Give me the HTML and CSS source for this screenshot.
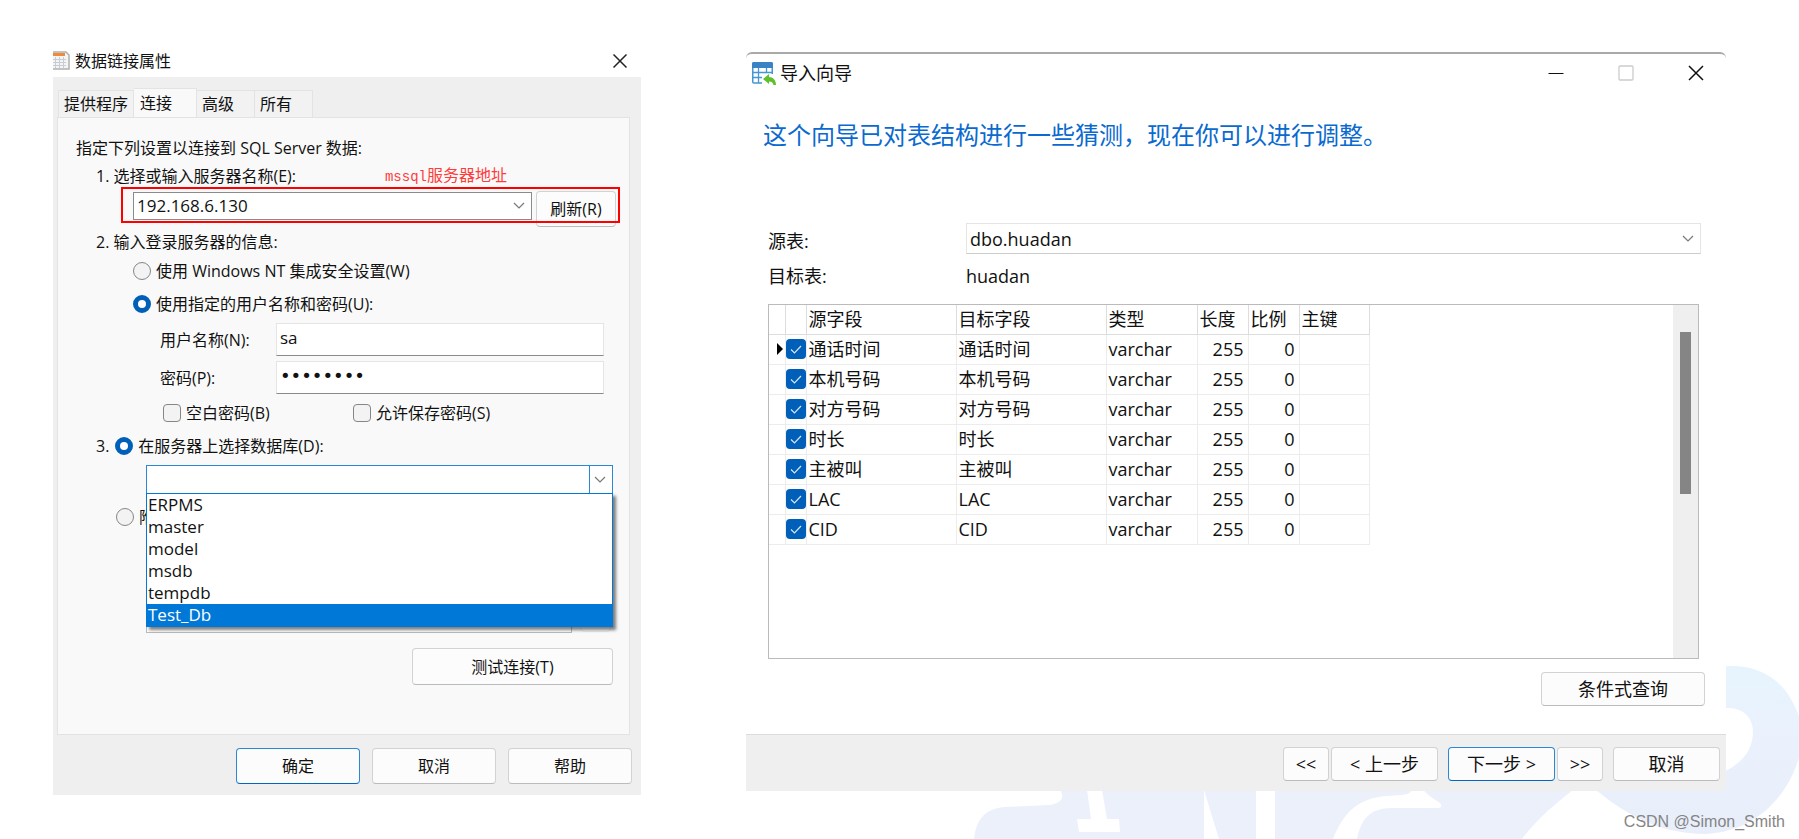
FILE: index.html
```html
<!DOCTYPE html>
<html lang="zh-CN">
<head>
  <meta charset="UTF-8">
  <meta name="viewport" content="width=device-width, initial-scale=1.0">
  <title>数据链接属性 / 导入向导</title>
  <link rel="stylesheet" href="styles.css">
</head>
<body>
  <svg class="backdrop" viewBox="969 660 830 179" aria-hidden="true">
    <defs>
      <linearGradient id="ring" x1="0" y1="0" x2="0" y2="1">
        <stop offset="0" stop-color="#e6f4fe"/>
        <stop offset="0.45" stop-color="#ebf1fc"/>
        <stop offset="1" stop-color="#e8effa"/>
      </linearGradient>
    </defs>
    <path fill="#ebf0fb" d="M974 839C976 818 986 809 1004 807L1050 805C1062 803 1065 797 1060 790H1573C1556 803 1536 820 1522 839Z"/>
    <path fill="#fff" d="M1087 790H1102L1107 819H1119L1120 832H1079L1077 819H1091ZM1204 790L1219 839H1204ZM1256 790H1275V839H1256Z"/>
    <path fill="#fff" d="M1333 839C1344 811 1360 798 1386 796L1402 795Q1412 794 1411 790H1423Q1431 798 1440 803Q1444 808 1437 808H1392C1369 808 1361 820 1357 839Z"/>
    <path fill="url(#ring)" d="M1700 668Q1716 666 1736 666C1768 668 1788 686 1799 716V758C1785 803 1750 832 1706 834C1664 834 1630 818 1596 790H1680C1710 776 1753 770 1753 731C1752 716 1743 708 1726 708H1700Z"/>
  </svg>

  <main class="page">
    <section class="dialog link-dialog">
      <header class="titlebar">
        <svg class="sheet-icon" viewBox="0 0 17 20" aria-hidden="true">
          <path d="M0 1H13L16 4V18H0" fill="#f4f4f4" stroke="#b0b0b0" stroke-width="1.5"/>
          <path d="M0 2H12V5H0Z" fill="#ee8a3a"/>
          <path d="M0 8.500H13M0 11.500H13M0 14.500H13M2.500 6V17M6.500 6V17M10.500 6V17" stroke="#c8ccd4"/>
        </svg>
        <h1>数据链接属性</h1>
        <button class="win-btn" aria-label="关闭"><svg width="14" height="14" viewBox="0 0 14 14"><path d="M0.500 0.500L13.500 13.500M13.500 0.500L0.500 13.500" stroke="#222" stroke-width="1.5"/></svg></button>
      </header>
      <div class="link-body">
        <nav class="tabs">
          <button class="tab">提供程序</button>
          <button class="tab active">连接</button>
          <button class="tab">高级</button>
          <button class="tab">所有</button>
        </nav>
        <form class="panel">
          <p class="line">指定下列设置以连接到 SQL Server 数据:</p>
          <div class="line step server-label">
            <label for="server">1. 选择或输入服务器名称(E):</label>
            <span class="note"><span class="note-latin">mssql</span>服务器地址</span>
          </div>
          <div class="server-row">
            <select id="server" class="server-select"><option>192.168.6.130</option></select>
            <button type="button" class="btn refresh">刷新(R)</button>
          </div>
          <p class="line step login-title">2. 输入登录服务器的信息:</p>
          <label class="line option nt"><input type="radio" name="auth"> 使用 Windows NT 集成安全设置(W)</label>
          <label class="line option named"><input type="radio" name="auth" checked> 使用指定的用户名称和密码(U):</label>
          <div class="field">
            <label for="user">用户名称(N):</label>
            <input type="text" id="user" value="sa">
          </div>
          <div class="field">
            <label for="pass">密码(P):</label>
            <input type="password" id="pass" value="password">
          </div>
          <div class="line checks">
            <label class="option"><input type="checkbox"> 空白密码(B)</label>
            <label class="option"><input type="checkbox"> 允许保存密码(S)</label>
          </div>
          <div class="line step db-line">
            <span>3.</span>
            <label class="option"><input type="radio" name="source" checked> 在服务器上选择数据库(D):</label>
          </div>
          <div class="combo">
            <select aria-label="数据库"><option></option></select>
            <ul class="combo-list" role="listbox">
              <li role="option">ERPMS</li>
              <li role="option">master</li>
              <li role="option">model</li>
              <li role="option">msdb</li>
              <li role="option">tempdb</li>
              <li role="option" class="selected" aria-selected="true">Test_Db</li>
            </ul>
          </div>
          <label class="line option attach"><input type="radio" name="source"> <span class="attach-text">附</span></label>
          <div class="file-row">
            <input type="text" aria-label="文件名">
            <button type="button" class="btn" aria-label="浏览" disabled></button>
          </div>
          <button type="button" class="btn test">测试连接(T)</button>
        </form>
        <footer class="link-footer">
          <button class="btn primary">确定</button>
          <button class="btn">取消</button>
          <button class="btn">帮助</button>
        </footer>
      </div>
    </section>

    <section class="dialog wizard">
      <header class="titlebar">
        <svg class="import-icon" viewBox="0 0 24 23" aria-hidden="true">
          <rect x="0.750" y="1" width="19.500" height="20" rx="1" fill="#fff" stroke="#4596d2" stroke-width="1.500"/>
          <path d="M0 1.500Q0 0 1.500 0H19.500Q21 0 21 1.500V6H0Z" fill="#3b82c4"/>
          <path d="M1 10.500H20M1 15.500H12M6.500 6V21M14.500 6V11" stroke="#4596d2" stroke-width="1.300"/>
          <path d="M10 12H22V22H10Z" fill="#fff"/>
          <path d="M11 17L17 12V15C21 15 24 18 24 23H21.500C21 20.500 19.500 19.500 17 19.500V22Z" fill="#5fbf2e"/>
        </svg>
        <h1>导入向导</h1>
        <div class="win-buttons">
          <button class="win-btn" aria-label="最小化"><svg width="16" height="16" viewBox="0 0 16 16"><path d="M0.500 8.500H15.500" stroke="#111"/></svg></button>
          <button class="win-btn" aria-label="最大化" disabled><svg width="16" height="16" viewBox="0 0 16 16"><rect x="1" y="1" width="14" height="14" rx="1" fill="none" stroke="#ccc" stroke-width="1.300"/></svg></button>
          <button class="win-btn" aria-label="关闭"><svg width="16" height="16" viewBox="0 0 16 16"><path d="M1 1L15 15M15 1L1 15" stroke="#111" stroke-width="1.500"/></svg></button>
        </div>
      </header>
      <div class="wizard-body">
        <h2>这个向导已对表结构进行一些猜测，现在你可以进行调整。</h2>
        <div class="table-row">
          <label for="source">源表:</label>
          <select id="source"><option>dbo.huadan</option></select>
        </div>
        <div class="table-row target">
          <span>目标表:</span>
          <span>huadan</span>
        </div>
        <div class="grid-box">
          <table>
            <colgroup>
              <col class="c-mark"><col class="c-check"><col class="c-name"><col class="c-name"><col class="c-type"><col class="c-num"><col class="c-num"><col class="c-key">
            </colgroup>
            <thead>
              <tr><th></th><th></th><th>源字段</th><th>目标字段</th><th>类型</th><th>长度</th><th>比例</th><th>主键</th></tr>
            </thead>
            <tbody>
              <tr><td><i class="marker"></i></td><td><input type="checkbox" aria-label="通话时间" checked></td><td>通话时间</td><td>通话时间</td><td>varchar</td><td>255</td><td>0</td><td></td></tr>
              <tr><td></td><td><input type="checkbox" aria-label="本机号码" checked></td><td>本机号码</td><td>本机号码</td><td>varchar</td><td>255</td><td>0</td><td></td></tr>
              <tr><td></td><td><input type="checkbox" aria-label="对方号码" checked></td><td>对方号码</td><td>对方号码</td><td>varchar</td><td>255</td><td>0</td><td></td></tr>
              <tr><td></td><td><input type="checkbox" aria-label="时长" checked></td><td>时长</td><td>时长</td><td>varchar</td><td>255</td><td>0</td><td></td></tr>
              <tr><td></td><td><input type="checkbox" aria-label="主被叫" checked></td><td>主被叫</td><td>主被叫</td><td>varchar</td><td>255</td><td>0</td><td></td></tr>
              <tr><td></td><td><input type="checkbox" aria-label="LAC" checked></td><td>LAC</td><td>LAC</td><td>varchar</td><td>255</td><td>0</td><td></td></tr>
              <tr><td></td><td><input type="checkbox" aria-label="CID" checked></td><td>CID</td><td>CID</td><td>varchar</td><td>255</td><td>0</td><td></td></tr>
            </tbody>
          </table>
          <div class="scrollbar"><div class="thumb"></div></div>
        </div>
      </div>
      <div class="query-row"><button class="btn query">条件式查询</button></div>
      <footer class="wizard-footer">
        <button class="btn small">&lt;&lt;</button>
        <button class="btn">&lt; 上一步</button>
        <button class="btn primary next">下一步 &gt;</button>
        <button class="btn small">&gt;&gt;</button>
        <button class="btn cancel">取消</button>
      </footer>
    </section>
  </main>
  <div class="watermark">CSDN @Simon_Smith</div>
</body>
</html>
```
FILE: styles.css
```css
*, *::before, *::after {
  box-sizing: border-box;
}
body {
  margin: 0;
  min-height: 100vh;
  position: relative;
  background: #fff;
  color: #111;
  font-family: "Open Sans", "Noto Sans CJK SC", sans-serif;
  font-size: 16px;
  line-height: 20px;
}
h1, h2, p, ul {
  margin: 0;
  padding: 0;
  font-weight: normal;
}
button, input, select {
  font: inherit;
  color: inherit;
  margin: 0;
}
.backdrop {
  position: absolute;
  right: 0;
  bottom: 0;
  width: 830px;
  height: 179px;
}
.page {
  position: relative;
  display: grid;
  grid-template-columns: 588fr 980fr;
  column-gap: 105px;
  align-items: start;
  padding: 45px 73px 0 53px;
}
.titlebar {
  display: flex;
  align-items: center;
}
.win-btn {
  display: flex;
  padding: 0;
  border: none;
  background: none;
}

/* controls */
.btn {
  height: 36px;
  padding: 0;
  border: 1px solid #d2d2d2;
  border-bottom-color: #bbb;
  border-radius: 4px;
  background: #fcfcfc;
}
.btn.primary {
  border-color: #2b88d8;
  border-bottom-color: #0067c0;
}
input[type="radio"], input[type="checkbox"] {
  appearance: none;
  flex: none;
  width: 18px;
  height: 18px;
  border: 1px solid #868686;
  background: #f3f3f3;
}
input[type="radio"] {
  border-radius: 50%;
}
input[type="radio"]:checked {
  border: 5px solid #005fb8;
  background: #fff;
}
input[type="checkbox"] {
  border-radius: 4px;
}
input[type="checkbox"]:checked {
  border: none;
  background: #005fb8 url("data:image/svg+xml,%3Csvg xmlns='http://www.w3.org/2000/svg' viewBox='0 0 20 20'%3E%3Cpath d='M5 10.500L8.500 14L15 7' fill='none' stroke='%23d5e6f5' stroke-width='1.200'/%3E%3C/svg%3E") center / 100%;
}
select {
  appearance: none;
  border: 1px solid #e5e5e5;
  border-radius: 0;
  padding: 0 28px 0 3px;
  background: #fff url("data:image/svg+xml,%3Csvg xmlns='http://www.w3.org/2000/svg' width='12' height='8' viewBox='0 0 12 8'%3E%3Cpath d='M1 1L6 6L11 1' fill='none' stroke='%23777' stroke-width='1.200'/%3E%3C/svg%3E") no-repeat right 6px center;
}
input[type="text"], input[type="password"] {
  border: 1px solid #e5e5e5;
  border-bottom-color: #8a8a8a;
  padding: 0 3px 4px;
  background: #fff;
}

/* data link properties */
.link-dialog .titlebar {
  height: 32px;
  padding-right: 14px;
}
.link-dialog h1 {
  font-size: 16px;
  margin-left: 5px;
  margin-right: auto;
}
.sheet-icon {
  width: 17px;
  height: 20px;
}
.link-body {
  background: #efefef;
  padding: 11px 9px 11px 4px;
}
.tabs {
  display: flex;
  align-items: flex-end;
  padding-left: 1px;
}
.tab {
  height: 27px;
  width: 58px;
  padding: 0 5px;
  border: 1px solid #e3e3e3;
  border-left: none;
  border-bottom: none;
  background: #f2f2f2;
  text-align: left;
  white-space: nowrap;
}
.tab:first-child {
  width: 76px;
  border-left: 1px solid #e3e3e3;
}
.tab.active {
  width: 63px;
  height: 29px;
  padding: 0 6px;
  background: #f9f9f9;
}
.panel {
  margin-right: 2px;
  padding: 20px 16px 49px 18px;
  border: 1px solid #e3e3e3;
  background: #f9f9f9;
}
.line {
  display: flex;
  align-items: center;
  min-height: 20px;
}
.step {
  padding-left: 20px;
}
.option {
  display: flex;
  align-items: center;
  gap: 5px;
}
.server-label {
  margin: 7px 0 4px;
}
.note {
  margin-left: auto;
  margin-right: 106px;
  color: #ff3b3b;
}
.note-latin {
  font-family: "Liberation Mono", monospace;
  font-size: 14px;
}
.server-row {
  position: relative;
  display: flex;
  gap: 4px;
  margin-left: 57px;
  margin-right: -3px;
}
/* red highlight frame around the server address */
.server-row::after {
  content: "";
  position: absolute;
  top: -4px;
  left: -12px;
  right: -4px;
  height: 36px;
  border: 2px solid #f00;
  pointer-events: none;
}
.server-select {
  flex: 1;
  height: 28px;
  margin-top: 1px;
  border-color: #8a8a8a;
  font-size: 17px;
}
.refresh {
  width: 80px;
}
.login-title {
  margin: 5px 0 9px;
}
.nt, .named {
  margin-left: 57px;
}
.named {
  margin-top: 13px;
  margin-bottom: 9px;
}
.field {
  display: flex;
  align-items: center;
  margin: 0 9px 5px 84px;
}
.field label {
  flex: 0 0 116px;
}
.field input {
  flex: 1;
  min-width: 0;
  height: 33px;
  font-size: 17px;
}
.field input[type="password"] {
  font-family: "DejaVu Sans", sans-serif;
  font-size: 18px;
}
.checks {
  margin: 9px 0 13px 87px;
}
.checks .option {
  width: 190px;
}
.db-line {
  gap: 6px;
}
.combo {
  position: relative;
  margin: 9px 0 13px 70px;
}
.combo select {
  display: block;
  width: 100%;
  height: 29px;
  border-color: #2b88d8;
}
.combo::before {
  content: "";
  position: absolute;
  top: 0;
  right: 23px;
  width: 1px;
  height: 29px;
  background: #2b88d8;
}
.combo-list {
  position: absolute;
  z-index: 1;
  top: 28px;
  left: 0;
  right: 0;
  list-style: none;
  border: 1px solid #0078d7;
  background: #fff;
  box-shadow: 3px 3px 3px rgba(0, 0, 0, 0.5);
  font-size: 17px;
  line-height: 22px;
}
.combo-list li {
  padding-left: 1px;
}
.combo-list .selected {
  background: #0078d7;
  color: #fff;
}
.attach {
  margin-left: 40px;
}
.attach-text {
  width: 7px;
  overflow: hidden;
}
.file-row {
  display: flex;
  gap: 8px;
  margin: 73px 2px 15px 70px;
}
.file-row input {
  flex: 1;
  min-width: 0;
  height: 33px;
  border-color: #bbb;
}
.file-row .btn {
  width: 31px;
  height: 32px;
  border-color: #ececec;
}
.test {
  display: block;
  width: 201px;
  height: 37px;
  margin-left: auto;
}
.link-footer {
  display: flex;
  justify-content: flex-end;
  gap: 12px;
  margin-top: 13px;
}
.link-footer .btn {
  width: 124px;
}

/* import wizard */
.wizard {
  margin-top: 7px;
  border-top: 2px solid #a9a9a9;
  border-radius: 6px 6px 0 0;
  background: #fff;
  font-size: 18px;
}
.wizard .titlebar {
  height: 38px;
  padding: 0 22px 0 6px;
}
.wizard h1 {
  font-size: 18px;
  margin-left: 4px;
}
.import-icon {
  width: 24px;
  height: 23px;
}
.win-buttons {
  display: flex;
  gap: 54px;
  margin-left: auto;
}
.wizard-body {
  padding: 27px 25px 13px 22px;
}
.wizard h2 {
  margin: 0 0 72px -5px;
  color: #0a6ad0;
  font-size: 24px;
  line-height: 32px;
}
.table-row {
  display: grid;
  grid-template-columns: 198px 1fr;
  align-items: center;
}
.table-row label {
  padding-top: 4px;
}
.table-row select {
  height: 31px;
  border-bottom-color: #ccc;
}
.table-row.target {
  margin: 12px 0 18px;
}
.grid-box {
  display: flex;
  justify-content: space-between;
  height: 355px;
  margin-right: 2px;
  border: 1px solid #bbb;
}
table {
  table-layout: fixed;
  border-collapse: collapse;
  width: 600px;
  height: 0;
}
.c-mark { width: 16px; }
.c-check { width: 21px; }
.c-name { width: 150px; }
.c-type { width: 91px; }
.c-num { width: 51px; }
.c-key { width: 70px; }
th, td {
  height: 30px;
  padding: 0 2px;
  border-right: 1px solid #ececec;
  border-bottom: 1px solid #ececec;
  font-weight: normal;
  text-align: left;
  white-space: nowrap;
}
th {
  height: 29px;
  border-color: #ddd;
}
td:nth-child(1), td:nth-child(2) {
  padding: 0;
}
td:nth-child(6), td:nth-child(7) {
  text-align: right;
  padding-right: 4px;
}
td input[type="checkbox"] {
  display: block;
  width: 20px;
  height: 20px;
}
.marker {
  display: block;
  margin-left: 8px;
  width: 0;
  border-left: 6px solid #000;
  border-top: 6px solid transparent;
  border-bottom: 6px solid transparent;
}
.scrollbar {
  width: 25px;
  padding: 27px 7px 0;
  background: #efefef;
}
.thumb {
  height: 162px;
  background: #858585;
}
.query-row {
  display: flex;
  justify-content: flex-end;
  padding: 0 21px 28px;
}
.query {
  width: 164px;
  height: 34px;
}
.wizard-footer {
  display: flex;
  justify-content: flex-end;
  gap: 2px;
  padding: 12px 6px 10px;
  border-top: 1px solid #dcdcdc;
  background: #efefef;
}
.wizard-footer .btn {
  width: 107px;
  height: 34px;
}
.wizard-footer .small {
  width: 46px;
}
.wizard-footer .next, .wizard-footer .cancel {
  margin-left: 8px;
}
.watermark {
  position: absolute;
  right: 14px;
  bottom: 7px;
  color: #858585;
  font-family: "Liberation Sans", sans-serif;
}
```
